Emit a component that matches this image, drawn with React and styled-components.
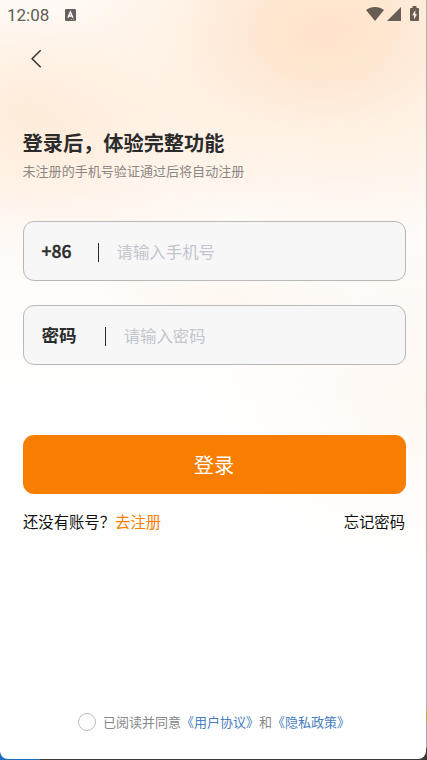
import * as React from "react"
import styled, { createGlobalStyle } from "styled-components"

const GlobalStyle = createGlobalStyle`
* {
  box-sizing: border-box;
}
body {
  margin: 0;
  font-family: "Noto Sans CJK SC", sans-serif;
  color: #2b2b2b;
}
`

const Window = styled.div`
width: 427px;
height: 760px;
overflow: hidden;
padding: 0 1px 1px 0;
background:
  linear-gradient(90deg, #1c6cc0 40px, transparent 40px) 0 100% / 427px 10px no-repeat,
  linear-gradient(#b2afac 708px, #b5ae4e 710px, #b5ae4e 722px, #aaa 724px, #aaa 747px, #3d3937 749px);
`

const Screen = styled.div`
display: flex;
flex-direction: column;
height: 759px;
border-radius: 0 0 8px 8px;
background:
  radial-gradient(ellipse 140px 95px at 314px 36px, rgba(255, 221, 190, 0.55), rgba(255, 223, 194, 0.38) 45%, rgba(255, 228, 200, 0) 100%),
  radial-gradient(ellipse 280px 215px at 345px 25px, rgba(255, 229, 205, 0.8), rgba(255, 233, 212, 0.55) 50%, rgba(255, 242, 230, 0) 100%),
  radial-gradient(ellipse 135px 105px at 25px 110px, rgba(255, 230, 206, 0.5), rgba(255, 233, 212, 0.32) 50%, rgba(255, 238, 220, 0) 100%),
  radial-gradient(ellipse 230px 130px at 70px 135px, rgba(255, 236, 219, 0.75), rgba(255, 242, 230, 0) 100%),
  radial-gradient(ellipse 130px 60px at 225px 300px, rgba(255, 245, 235, 0.6), rgba(255, 249, 243, 0) 100%),
  radial-gradient(ellipse 220px 170px at 427px 400px, rgba(255, 247, 240, 0.85), rgba(255, 251, 247, 0) 100%),
  linear-gradient(#fffaf5, #fffbf8 260px, #ffffff 420px);
`

const StatusBar = styled.div`
display: flex;
align-items: center;
height: 30px;
padding: 0 7px;
font-family: Roboto, sans-serif;
font-size: 17px;
color: #625c57;
`

const Clock = styled.span`
width: 58px;
line-height: 30px;
`

const StatusIcons = styled.div`
display: flex;
align-items: center;
margin-left: auto;
height: 28px;
margin-bottom: 2px;
color: #685d52;
`

const Icon = styled.svg`
display: block;
flex: none;
margin-left: ${props => props.$gap || 0}px;
`

const BackButton = styled.button`
width: 24px;
height: 24px;
margin: 17px 0 0 24px;
padding: 0;
border: 0;
background: none;
`

const Content = styled.main`
display: flex;
flex: 1;
flex-direction: column;
padding: 56px 20.5px 0 22.5px;
`

const Title = styled.h1`
margin: 0;
font-size: 20.2px;
line-height: 31px;
font-weight: 700;
`

const Subtitle = styled.p`
margin: 3px 0 39.5px;
font-size: 13.05px;
line-height: 20px;
color: #8c8783;
`

const Field = styled.label`
display: flex;
align-items: center;
height: 60px;
margin-bottom: ${props => props.$last ? 70 : 24}px;
padding: 0 18px;
border: 1px solid #b8b8b8;
border-radius: 11px;
background: #f7f7f8;
`

const Prefix = styled.span`
font-size: 17.6px;
font-weight: ${props => props.$weight};
line-height: 26px;
-webkit-text-stroke: ${props => props.$stroke || 0}px currentColor;
`

const Divider = styled.span`
width: 1px;
height: 19px;
margin: 3px 18px 0 ${props => props.$gap}px;
background: #2b2b2b;
`

const Input = styled.input`
flex: 1;
min-width: 0;
padding: 0;
border: 0;
outline: 0;
background: none;
font-family: inherit;
font-size: 16.4px;
line-height: 24px;

&::placeholder {
  color: #c3c6ce;
  opacity: 1;
}
`

const LoginButton = styled.button`
height: 59px;
padding: 1px 0 0;
border: 0;
border-radius: 11px;
background: #f77e00;
color: #fff;
font-family: inherit;
font-size: 20.2px;
line-height: 30px;
`

const Links = styled.div`
display: flex;
justify-content: space-between;
margin-top: 16.5px;
padding: 0 0.5px 0 0.5px;
font-size: 15.35px;
line-height: 23px;
color: #111;
`

const RegisterLink = styled.span`
color: #f77e00;
`

const Agreement = styled.footer`
display: flex;
align-items: center;
justify-content: center;
height: 20px;
margin-bottom: 27px;
padding-left: 2px;
font-size: 13px;
line-height: 20px;
color: #888;
`

const Radio = styled.span`
width: 18px;
height: 18px;
margin-right: 7px;
border: 1px solid #bdbdbd;
border-radius: 50%;
`

const Policy = styled.span`
color: #477dc0;
`

const App = () => (
    <Window>
        <GlobalStyle />
        <Screen>
            <StatusBar>
                <Clock>12:08</Clock>
                <Icon width="11" height="12" viewBox="0 0 11 12">
                    <rect width="11" height="12" rx="1.3" fill="#66615e" />
                    <path d="M3 8.7 5.4 3 7.9 8.7M3.9 7h3" fill="none" stroke="#fff" strokeWidth="1.4" />
                    <path d="M6 10.6h1M8 10.6h1" stroke="#ddd" strokeWidth="0.8" />
                </Icon>
                <StatusIcons>
                    <Icon width="18" height="14" viewBox="0 0 18 14">
                        <path d="M0 3C5-.9 13-.9 18 3L9 14Z" fill="currentColor" />
                    </Icon>
                    <Icon $gap={3} width="14" height="14" viewBox="0 0 14 14">
                        <path d="M14 0v14H0Z" fill="currentColor" />
                    </Icon>
                    <Icon $gap={9} width="9" height="16" viewBox="0 0 9 16">
                        <path d="M2.5 0h4v2H8q1 0 1 1v11q0 1-1 1H1q-1 0-1-1V3q0-1 1-1h1.5Z" fill="currentColor" />
                        <path d="M5.3 4 2.2 9.3H4V13.4l3-5.2H5.3Z" fill="#fff1e5" />
                    </Icon>
                </StatusIcons>
            </StatusBar>

            <BackButton aria-label="返回">
                <Icon width="24" height="24" viewBox="0 0 24 24">
                    <path d="m16.7 3.2-8.6 8.6 8.6 8.4" fill="none" stroke="#333" strokeWidth="1.5" />
                </Icon>
            </BackButton>

            <Content>
                <Title>登录后，体验完整功能</Title>
                <Subtitle>未注册的手机号验证通过后将自动注册</Subtitle>

                <Field>
                    <Prefix $weight={500} $stroke={0.4}>+86</Prefix>
                    <Divider $gap={26} />
                    <Input type="tel" placeholder="请输入手机号" />
                </Field>
                <Field $last>
                    <Prefix $weight={700}>密码</Prefix>
                    <Divider $gap={28} />
                    <Input type="password" placeholder="请输入密码" />
                </Field>

                <LoginButton>登录</LoginButton>
                <Links>
                    <span>还没有账号？<RegisterLink>去注册</RegisterLink></span>
                    <span>忘记密码</span>
                </Links>
            </Content>

            <Agreement>
                <Radio />
                <span>已阅读并同意<Policy>《用户协议》</Policy>和<Policy>《隐私政策》</Policy></span>
            </Agreement>
        </Screen>
    </Window>
)

export default App
